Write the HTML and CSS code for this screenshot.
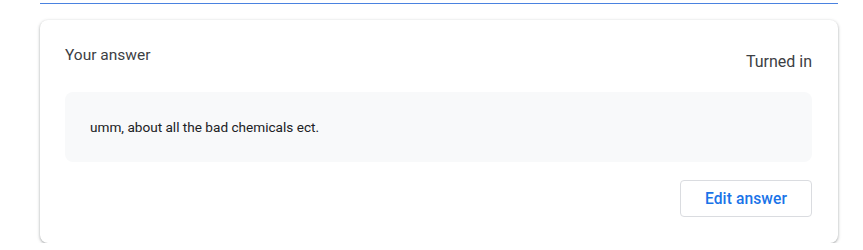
FILE: index.html
```html
<!DOCTYPE html>
<html lang="en">
<head>
<meta charset="utf-8">
<title>Your answer</title>
<link rel="stylesheet" href="styles.css">
</head>
<body>
<div class="page">
  <div class="rule"></div>
  <section class="card">
    <header class="card-head">
      <h2 class="card-title">Your answer</h2>
      <span class="status">Turned in</span>
    </header>
    <div class="answer">umm, about all the bad chemicals ect.</div>
    <div class="actions">
      <button class="btn-outline" type="button">Edit answer</button>
    </div>
  </section>
</div>
</body>
</html>
```

FILE: styles.css
```css
* { box-sizing: border-box; }
html, body { margin: 0; padding: 0; background: #fff; }
body { font-family: Roboto, "Liberation Sans", sans-serif; color: #3c4043; }

.page {
  padding: 3px 25px 0 40px;
}

.rule {
  width: 798px;
  height: 1px;
  background: #4a82e0;
}

.card {
  margin-top: 16px;
  width: 798px;
  background: #fff;
  border-radius: 8px;
  box-shadow: 0 1px 2px rgba(60, 64, 67, 0.3), 0 1px 3px 1px rgba(60, 64, 67, 0.15);
  padding: 24px 26px 26px 25px;
}

.card-head {
  display: flex;
  justify-content: space-between;
  align-items: flex-start;
}

.card-title {
  margin: 0;
  font-size: 15.5px;
  font-weight: 400;
  line-height: 22px;
  color: #3c4043;
}

.status {
  margin-top: 7px;
  font-size: 16px;
  line-height: 22px;
  color: #3c4043;
}

.answer {
  margin-top: 19px;
  background: #f8f9fa;
  border-radius: 8px;
  padding: 25px 25px;
  font-size: 13.6px;
  line-height: 20px;
  color: #202124;
}

.actions {
  display: flex;
  justify-content: flex-end;
  margin-top: 18px;
}

.btn-outline {
  width: 132px;
  height: 37px;
  background: #fff;
  border: 1px solid #dadce0;
  border-radius: 4px;
  font-family: Roboto, "Liberation Sans", sans-serif;
  font-size: 15.6px;
  font-weight: 500;
  letter-spacing: 0.1px;
  color: #1a73e8;
  padding: 0;
}
```
